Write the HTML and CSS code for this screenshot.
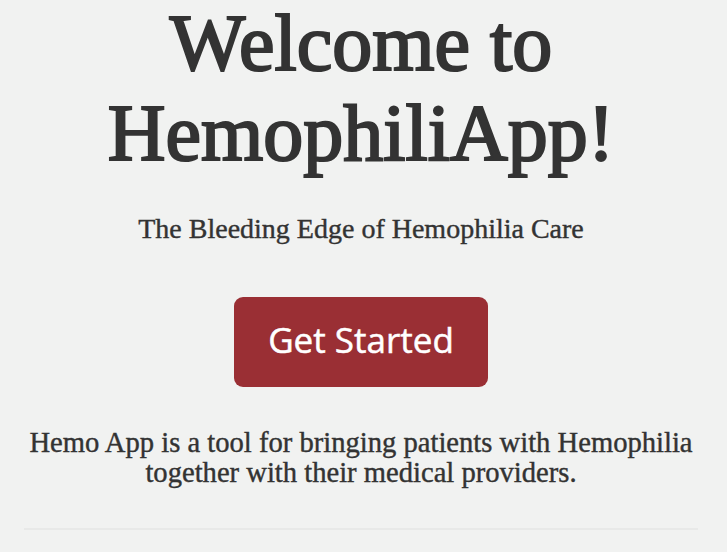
FILE: index.html
```html
<!DOCTYPE html>
<html lang="en">
<head>
<meta charset="utf-8">
<title>HemophiliApp</title>
<link rel="stylesheet" href="styles.css">
</head>
<body>
<main class="page">
  <section class="hero">
    <h1 class="hero-title">Welcome to HemophiliApp!</h1>
    <p class="hero-tagline">The Bleeding Edge of Hemophilia Care</p>
    <a class="btn-start" href="#">Get Started</a>
    <p class="hero-desc">Hemo App is a tool for bringing patients with Hemophilia together with their medical providers.</p>
  </section>
  <hr class="divider">
</main>
</body>
</html>
```
FILE: styles.css
```css
html, body {
  margin: 0;
  padding: 0;
  background: #f1f2f1;
}
body {
  font-family: "Liberation Serif", "Times New Roman", serif;
  color: #333333;
  height: 552px;
  overflow: hidden;
}
.page {
  padding: 0 29px 0 24px;
}
.hero {
  display: flex;
  flex-direction: column;
  align-items: center;
  text-align: center;
}
.hero-title {
  margin: -2px 0 0;
  font-size: 80px;
  line-height: 90px;
  font-weight: normal;
  -webkit-text-stroke: 2.2px #333333;
  color: #333333;
}
.hero-tagline {
  margin: 34px 0 0;
  font-size: 28px;
  line-height: 1.2;
  -webkit-text-stroke: 0.4px #333333;
}
.btn-start {
  margin-top: 51px;
  box-sizing: border-box;
  height: 90px;
  padding: 0 34px 4px;
  display: inline-flex;
  align-items: center;
  justify-content: center;
  background: #9a2f34;
  color: #ffffff;
  border-radius: 9px;
  font-family: "Open Sans", "Liberation Sans", sans-serif;
  font-size: 35px;
  font-weight: 500;
  -webkit-text-stroke: 0.5px #ffffff;
  text-decoration: none;
}
.hero-desc {
  margin: 41px 0 0;
  font-size: 28.6px;
  line-height: 30px;
  -webkit-text-stroke: 0.4px #333333;
}
.divider {
  margin: 40px 0 0;
  border: 0;
  height: 2px;
  background: #e8e9e8;
}
```
